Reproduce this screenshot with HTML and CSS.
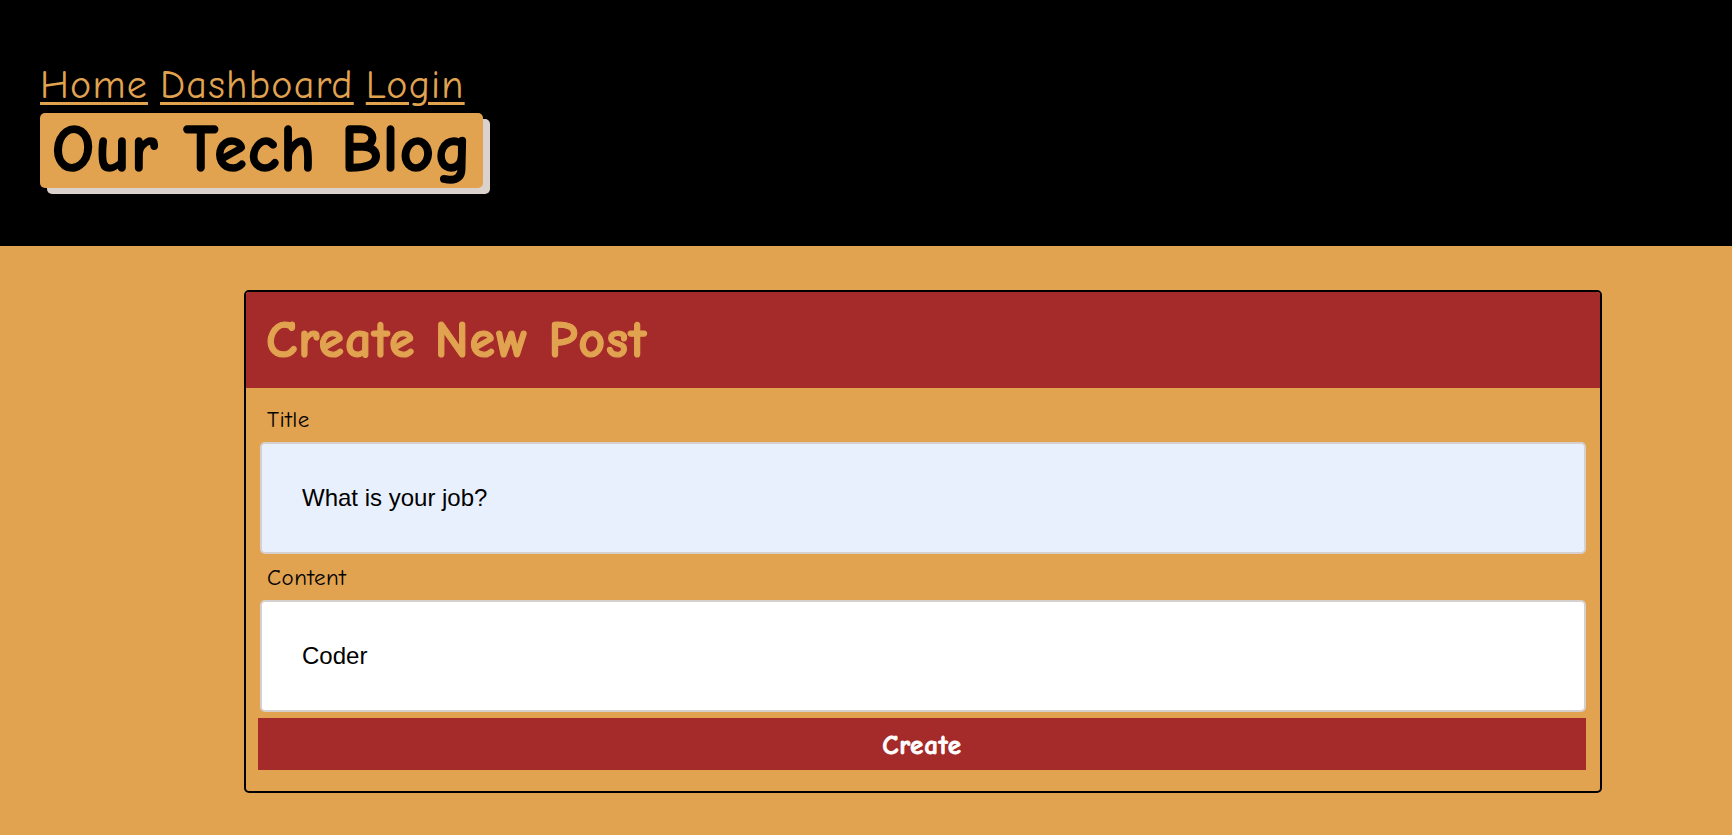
FILE: index.html
```html
<!DOCTYPE html>
<html lang="en">
<head>
<meta charset="utf-8">
<title>Our Tech Blog</title>
<link rel="stylesheet" href="styles.css">
</head>
<body>
<header class="site-header">
  <nav class="nav">
    <a href="#">Home</a>
    <a href="#">Dashboard</a>
    <a href="#">Login</a>
  </nav>
  <h1 class="brand">Our Tech Blog</h1>
</header>
<main class="main">
  <section class="card">
    <div class="card-header">
      <h2 class="card-title">Create New Post</h2>
    </div>
    <form class="form">
      <label class="label" for="title">Title</label>
      <input class="field field-autofill" id="title" type="text" value="What is your job?">
      <label class="label" for="content">Content</label>
      <input class="field" id="content" type="text" value="Coder">
      <button class="btn" type="button">Create</button>
    </form>
  </section>
</main>
</body>
</html>
```

FILE: styles.css
```css
html, body {
  margin: 0;
  padding: 0;
}

body {
  background: #e1a350;
  font-family: "Comic Sans MS", "Comic Neue", "Open Sans", sans-serif;
  min-height: 835px;
}

.site-header {
  background: #000;
  height: 246px;
  box-sizing: border-box;
  padding: 60px 0 0 40px;
  display: flex;
  flex-direction: column;
  align-items: flex-start;
}

.nav {
  display: flex;
  gap: 12px;
  font-size: 40px;
  line-height: 50px;
  letter-spacing: 1.2px;
}

.nav a {
  color: #e1a350;
  text-decoration: underline;
  text-decoration-thickness: 3px;
  text-underline-offset: 4px;
}

.brand {
  margin: 3px 0 0 0;
  background: #e1a350;
  color: #000;
  font-size: 66px;
  font-weight: 700;
  line-height: 75px;
  letter-spacing: 1.3px;
  -webkit-text-stroke: 1.5px #000;
  padding: 0 10px 0 12px;
  border-radius: 5px;
  box-shadow: 7px 6px 0 #dbd2ce;
}

.main {
  padding: 44px 130px 43px 244px;
}

.card {
  border: 2px solid #000;
  border-radius: 5px;
  overflow: hidden;
}

.card-header {
  background: #a52a2a;
  height: 96px;
  display: flex;
  align-items: center;
  padding: 0 20px;
}

.card-title {
  margin: 0;
  color: #e1a350;
  font-size: 52px;
  font-weight: 700;
  line-height: 1;
  letter-spacing: 0.9px;
  -webkit-text-stroke: 1.2px #e1a350;
}

.form {
  display: flex;
  flex-direction: column;
  padding: 14px 14px 21px 12px;
}

.label {
  font-size: 23px;
  line-height: 30px;
  letter-spacing: 0.5px;
  color: #000;
  padding-left: 9px;
  margin-top: 3px;
  margin-bottom: 7px;
}

.field {
  box-sizing: border-box;
  height: 112px;
  margin: 0 0 6px 2px;
  border: 2px solid #d6d0cf;
  border-radius: 5px;
  padding: 0 40px;
  background: #fff;
  font-family: "Liberation Sans", Arial, sans-serif;
  font-size: 24px;
  color: #000;
  outline: none;
}

.field-autofill {
  background: #e8f0fe;
}

.btn {
  height: 52px;
  padding-top: 3px;
  border: none;
  background: #a52a2a;
  color: #fff;
  font-family: "Comic Sans MS", "Comic Neue", "Open Sans", sans-serif;
  font-size: 27px;
  font-weight: 700;
  letter-spacing: 0.8px;
  -webkit-text-stroke: 0.8px #fff;
  cursor: pointer;
}
```
